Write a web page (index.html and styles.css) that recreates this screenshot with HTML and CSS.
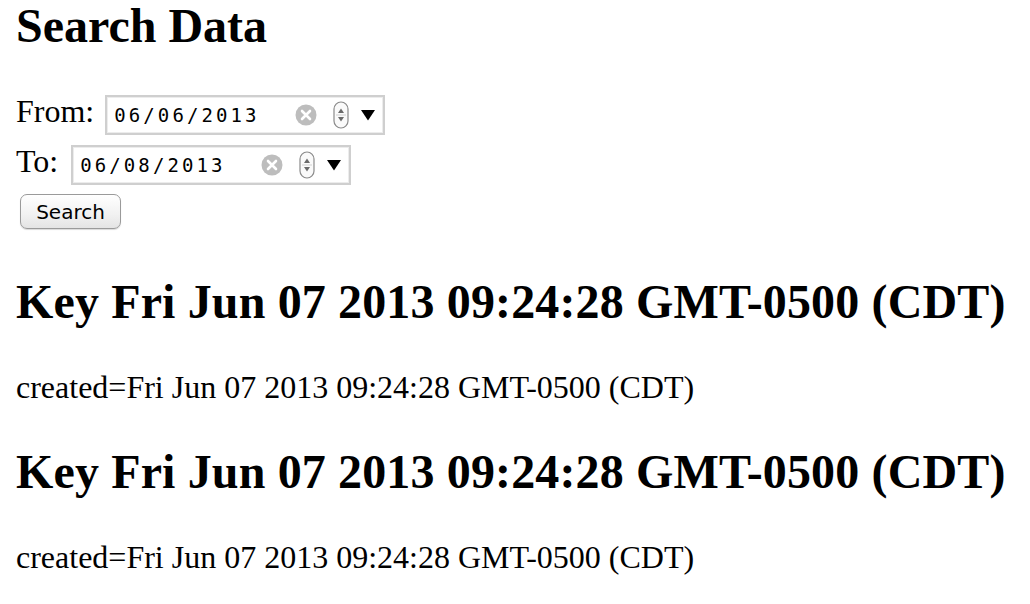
FILE: index.html
```html
<!DOCTYPE html>
<html>
<head>
<meta charset="utf-8">
<link rel="stylesheet" href="styles.css">
</head>
<body>
<h2 class="title">Search Data</h2>
<form class="search-form">
  <div class="row">
    <label class="label">From:</label>
    <div class="date-input">
      <span class="date-text">06/06/2013</span>
      <span class="clear-icon"><svg width="22" height="22" viewBox="0 0 22 22"><circle cx="11" cy="11" r="10.5" fill="#bdbdbd"/><path d="M7 7 L15 15 M15 7 L7 15" stroke="#fff" stroke-width="2.6" stroke-linecap="round"/></svg></span>
      <span class="spinner"><svg width="16" height="28" viewBox="0 0 16 28"><rect x="1" y="1" width="14" height="26" rx="7" fill="#fafafa" stroke="#8a8a8a" stroke-width="1.2"/><path d="M5 12 L8 7.5 L11 12 Z" fill="#6a6a6a"/><path d="M5 16 L8 20.5 L11 16 Z" fill="#6a6a6a"/><path d="M3 14 H13" stroke="#d0d0d0" stroke-width="1"/></svg></span>
      <span class="dropdown"><svg width="16" height="12" viewBox="0 0 16 12"><path d="M1 1 H15 L8 11.5 Z" fill="#000"/></svg></span>
    </div>
  </div>
  <div class="row">
    <label class="label label-to">To:</label>
    <div class="date-input">
      <span class="date-text">06/08/2013</span>
      <span class="clear-icon"><svg width="22" height="22" viewBox="0 0 22 22"><circle cx="11" cy="11" r="10.5" fill="#bdbdbd"/><path d="M7 7 L15 15 M15 7 L7 15" stroke="#fff" stroke-width="2.6" stroke-linecap="round"/></svg></span>
      <span class="spinner"><svg width="16" height="28" viewBox="0 0 16 28"><rect x="1" y="1" width="14" height="26" rx="7" fill="#fafafa" stroke="#8a8a8a" stroke-width="1.2"/><path d="M5 12 L8 7.5 L11 12 Z" fill="#6a6a6a"/><path d="M5 16 L8 20.5 L11 16 Z" fill="#6a6a6a"/><path d="M3 14 H13" stroke="#d0d0d0" stroke-width="1"/></svg></span>
      <span class="dropdown"><svg width="16" height="12" viewBox="0 0 16 12"><path d="M1 1 H15 L8 11.5 Z" fill="#000"/></svg></span>
    </div>
  </div>
  <div class="button-row">
    <button type="button" class="search-btn">Search</button>
  </div>
</form>
<h2 class="key">Key Fri Jun 07 2013 09:24:28 GMT-0500 (CDT)</h2>
<p class="created">created=Fri Jun 07 2013 09:24:28 GMT-0500 (CDT)</p>
<h2 class="key">Key Fri Jun 07 2013 09:24:28 GMT-0500 (CDT)</h2>
<p class="created">created=Fri Jun 07 2013 09:24:28 GMT-0500 (CDT)</p>
</body>
</html>
```

FILE: styles.css
```css
html, body {
  background: #fff;
}
body {
  margin: 0 16px;
  font-family: "Liberation Serif", "Times New Roman", serif;
  font-size: 32px;
  color: #000;
}
h2 {
  font-size: 48px;
  font-weight: bold;
  margin: 38px 0 40px 0;
}
.title {
  margin-top: -2px;
}
.key {
  letter-spacing: 0.14px;
}
.search-form {
  margin: 0 0 35px 0;
  display: flex;
  flex-direction: column;
}
.row {
  display: flex;
  align-items: baseline;
  height: 50px;
}
.label {
  margin-right: 11px;
}
.label-to {
  margin-right: 13px;
}
.date-input {
  display: inline-flex;
  align-items: center;
  box-sizing: border-box;
  width: 280px;
  height: 40px;
  border: 2px solid #cfcfcf;
  box-shadow: inset 0 0 0 1px #ececec;
  padding: 0 0 0 7px;
  background: #fff;
}
.date-text {
  font-family: "DejaVu Sans Mono", "Liberation Mono", monospace;
  font-size: 19px;
  letter-spacing: 3.1px;
  width: 181px;
  white-space: pre;
  color: #000;
}
.clear-icon {
  display: flex;
  width: 22px;
  height: 22px;
  margin-right: 16px;
}
.spinner {
  display: flex;
  width: 16px;
  height: 28px;
  margin-right: 11px;
}
.dropdown {
  display: flex;
  width: 16px;
  height: 12px;
}
.button-row {
  display: flex;
  padding-left: 4px;
  padding-top: 1px;
  height: 42px;
}
.search-btn {
  box-sizing: border-box;
  width: 101px;
  height: 35px;
  font-family: "DejaVu Sans", "Liberation Sans", sans-serif;
  font-size: 20px;
  color: #000;
  border: 1px solid #9a9a9a;
  border-radius: 7px;
  background: linear-gradient(#ffffff, #f1f1f1 60%, #e4e4e4);
  box-shadow: 0 1px 1px rgba(0,0,0,0.15);
  padding: 0;
}
.created {
  margin: 40px 0 38px 0;
}
```
